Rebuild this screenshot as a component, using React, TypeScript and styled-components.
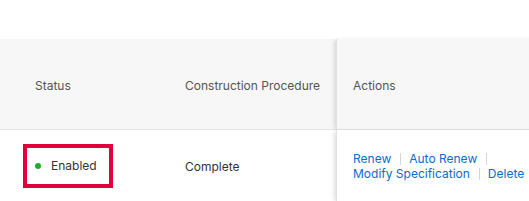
import styled, { createGlobalStyle } from "styled-components";

const GlobalStyle = createGlobalStyle`
  html, body {
    margin: 0;
    padding: 0;
    background: #ffffff;
  }
  body {
    font-family: Inter, "Noto Sans", "Liberation Sans", sans-serif;
    font-size: 12px;
    color: #333333;
    -webkit-font-smoothing: antialiased;
  }
`;

const Page = styled.div`
  padding-top: 39px;
  width: 529px;
  overflow: hidden;
`;

const Table = styled.div`
  display: grid;
  grid-template-columns: 169px 167px 210px;
  width: 546px;
`;

const HeadCell = styled.div<{ $fixed?: boolean; $pad: number }>`
  display: flex;
  align-items: center;
  height: 91px;
  padding-left: ${(p) => p.$pad}px;
  padding-top: 2px;
  box-sizing: border-box;
  background: #f7f7f7;
  color: #555555;
  border-bottom: 1px solid #e6e6e6;
  position: relative;
  ${(p) =>
    p.$fixed &&
    `box-shadow: -3px 0 4px -1px rgba(0, 0, 0, 0.12);
     border-left: 1px solid #e2e2e2;`}
`;

const BodyCell = styled.div<{ $fixed?: boolean; $pad: number }>`
  display: flex;
  align-items: center;
  height: 72px;
  padding-left: ${(p) => p.$pad}px;
  background: #ffffff;
  position: relative;
  ${(p) =>
    p.$fixed &&
    `box-shadow: -3px 0 4px -1px rgba(0, 0, 0, 0.12);
     border-left: 1px solid #e2e2e2;`}
`;

const Highlight = styled.div`
  display: inline-flex;
  align-items: center;
  gap: 10px;
  border: 4px solid #e2003c;
  padding: 10px 12px 10px 8px;
  line-height: 16px;
  color: #333333;
`;

const Dot = styled.span<{ $color: string }>`
  width: 6px;
  height: 6px;
  border-radius: 50%;
  background: ${(p) => p.$color};
`;

const Actions = styled.div`
  display: flex;
  flex-wrap: wrap;
  width: 176px;
  line-height: 15px;
  row-gap: 0;
`;

const Action = styled.a`
  display: inline-flex;
  align-items: center;
  white-space: nowrap;
  color: #0b6bcb;
  text-decoration: none;
  cursor: pointer;

  &:not(:last-child)::after {
    content: "";
    display: inline-block;
    width: 1px;
    height: 12px;
    background: #d5d5d5;
    margin: 0 8px 0 9px;
  }
`;

const actions = ["Renew", "Auto Renew", "Modify Specification", "Delete"];

export default function App() {
  return (
    <Page>
      <GlobalStyle />
      <Table>
        <HeadCell $pad={35}>Status</HeadCell>
        <HeadCell $pad={16}>Construction Procedure</HeadCell>
        <HeadCell $pad={16} $fixed>
          Actions
        </HeadCell>

        <BodyCell $pad={23}>
          <Highlight>
            <Dot $color="#1aaf2b" />
            Enabled
          </Highlight>
        </BodyCell>
        <BodyCell $pad={16}>Complete</BodyCell>
        <BodyCell $pad={16} $fixed>
          <Actions>
            {actions.map((a) => (
              <Action key={a}>{a}</Action>
            ))}
          </Actions>
        </BodyCell>
      </Table>
    </Page>
  );
}
